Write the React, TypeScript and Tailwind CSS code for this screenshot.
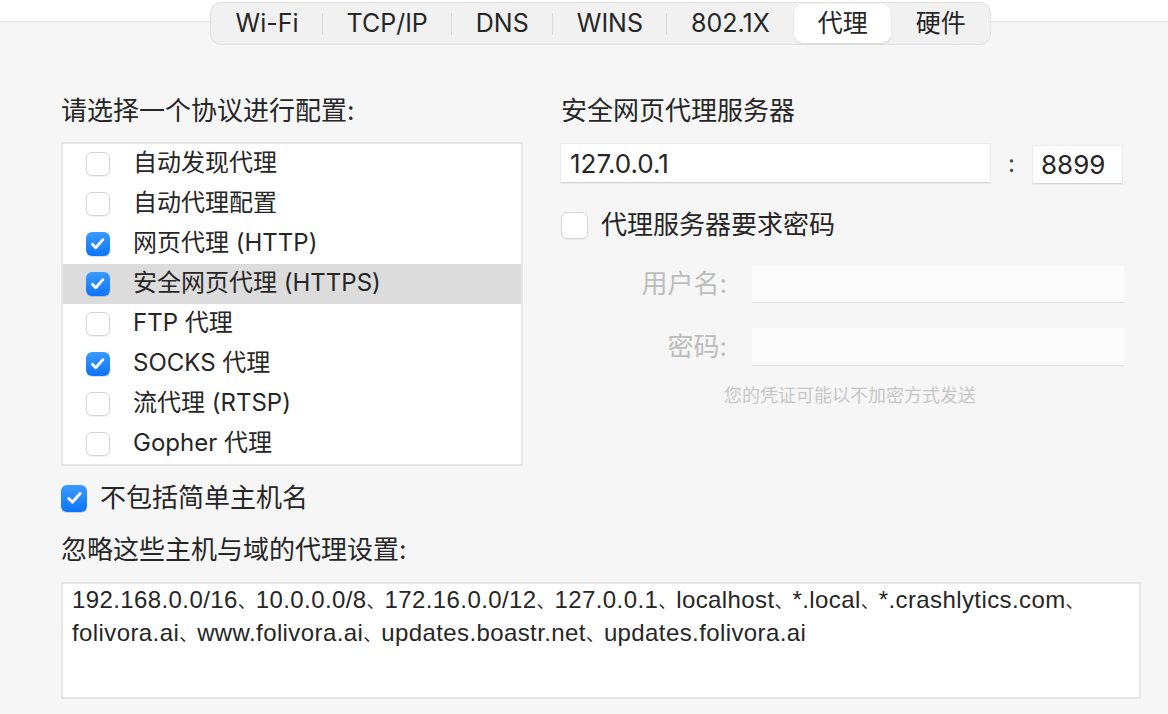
import React from 'react';

const ui = "font-['Inter','Noto_Sans_CJK_SC',sans-serif]";

const tabs = ['Wi-Fi', 'TCP/IP', 'DNS', 'WINS', '802.1X', '代理', '硬件'];
const activeTab = '代理';

const protocols = [
  { label: '自动发现代理', checked: false },
  { label: '自动代理配置', checked: false },
  { label: '网页代理 (HTTP)', checked: true },
  { label: '安全网页代理 (HTTPS)', checked: true, selected: true },
  { label: 'FTP 代理', checked: false },
  { label: 'SOCKS 代理', checked: true },
  { label: '流代理 (RTSP)', checked: false },
  { label: 'Gopher 代理', checked: false },
];

const bypassLines = [
  ['192.168.0.0/16', '10.0.0.0/8', '172.16.0.0/12', '127.0.0.1', 'localhost', '*.local', '*.crashlytics.com', ''],
  ['folivora.ai', 'www.folivora.ai', 'updates.boastr.net', 'updates.folivora.ai'],
];

const Check = ({ checked, size = 'w-6 h-6' }: { checked: boolean; size?: string }) =>
  checked ? (
    <span
      className={`${size} shrink-0 rounded-[6px] bg-gradient-to-b from-[#3a9bff] to-[#0a74fb] flex items-center justify-center shadow-[0_1px_1px_rgba(0,0,0,0.15)]`}
    >
      <svg viewBox="0 0 24 24" className="w-[80%] h-[80%]" fill="none">
        <path d="M5.5 12.8l4.2 4.4L18.6 7" stroke="white" strokeWidth="3.4" strokeLinecap="round" strokeLinejoin="round" />
      </svg>
    </span>
  ) : (
    <span
      className={`${size} shrink-0 rounded-[6px] bg-white border border-[#d6d6d6] shadow-[0_1px_1px_rgba(0,0,0,0.05)]`}
    />
  );

export default function App() {
  return (
    <div className={`w-[1168px] h-[714px] overflow-hidden bg-[#f6f6f6] text-[#262626] ${ui}`}>
      {/* header with segmented tabs */}
      <div className="relative h-[46px]">
        <div className="h-[22px] bg-white border-b border-[#e6e6e6]" />
        <div className="absolute left-[210px] top-[2px] h-[43px] flex items-center px-[1px] rounded-[11px] bg-[#f1f1f1] border border-[#e1e1e1]">
          {tabs.map((t, i) => {
            const active = t === activeTab;
            return (
              <React.Fragment key={t}>
                {i > 0 && (
                  <span className={`w-px h-[22px] ${i >= 5 ? 'bg-transparent' : 'bg-[#d9d9d9]'}`} />
                )}
                <span
                  className={`h-[39px] flex items-center px-[23.5px] text-[25px] leading-none ${
                    active ? 'bg-white rounded-[9px] shadow-[0_1px_2px_rgba(0,0,0,0.12)]' : ''
                  }`}
                >
                  {t}
                </span>
              </React.Fragment>
            );
          })}
        </div>
      </div>

      <div className="pl-[61px] pr-[27px]">
        <div className="flex">
          {/* left column */}
          <div className="w-[462px] pt-[47px]">
            <div className="text-[26px] leading-[36px]">请选择一个协议进行配置:</div>
            <div className="mt-[13px] bg-white border-2 border-[#e6e6e6]">
              {protocols.map((p) => (
                <div
                  key={p.label}
                  className={`h-10 flex items-center pl-[23px] gap-[23px] text-[24px] ${p.selected ? 'bg-[#dcdcdc]' : ''}`}
                >
                  <Check checked={p.checked} />
                  <span className="-mt-[2px]">{p.label}</span>
                </div>
              ))}
            </div>
          </div>

          {/* right column */}
          <div className="ml-[38px] flex-1 pt-[47px]">
            <div className="text-[26px] leading-[36px]">安全网页代理服务器</div>
            <div className="mt-[15px] flex items-start">
              <div className="w-[429px] h-[39px] bg-white border-b border-[#d6d6d6] shadow-[0_0_0_1px_#ececec] flex items-center pl-[9px] text-[26px]">
                127.0.0.1
              </div>
              <span className="w-[43px] h-[39px] flex items-center justify-center text-[24px] text-[#444]">:</span>
              <div className="mt-[2px] w-[89px] h-[38px] bg-white border-b border-[#d6d6d6] shadow-[0_0_0_1px_#ececec] flex items-center pl-[8px] text-[26px]">
                8899
              </div>
            </div>
            <div className="mt-[26px] flex items-center gap-[13px]">
              <Check checked={false} size="w-[27px] h-[27px]" />
              <span className="text-[26px] leading-[30px]">代理服务器要求密码</span>
            </div>
            <div className="mt-[24px] flex items-center">
              <span className="w-[166px] text-right text-[26px] text-[#bdbdbd]">用户名:</span>
              <div className="ml-[25px] w-[372px] h-[38px] bg-[#fbfbfb] border-b border-[#e2e2e2]" />
            </div>
            <div className="mt-[24px] flex items-center">
              <span className="w-[166px] text-right text-[26px] text-[#bdbdbd]">密码:</span>
              <div className="ml-[25px] w-[372px] h-[38px] bg-[#fbfbfb] border-b border-[#e2e2e2]" />
            </div>
            <div className="mt-[16px] pl-[163px] text-[18px] text-[#c6c6c6]">您的凭证可能以不加密方式发送</div>
          </div>
        </div>

        <div className="mt-[17px] flex items-center gap-[13px]">
          <Check checked size="w-[26px] h-[27px]" />
          <span className="text-[26px] leading-[30px]">不包括简单主机名</span>
        </div>
        <div className="mt-[19px] text-[26px] leading-[36px]">忽略这些主机与域的代理设置:</div>
        <div className="mt-[14px] h-[117px] bg-white border-2 border-[#e6e6e6] px-[9px] text-[24px] leading-[33px] tracking-[0.4px] font-['Liberation_Sans','Noto_Sans_CJK_SC',sans-serif]">
          <div className="-mt-[1px]">
            {bypassLines.map((line, li) => (
              <div key={li} className="h-[33px] whitespace-nowrap">
                {line.map((item, i) => (
                  <React.Fragment key={i}>
                    {i > 0 && (
                      <span className="inline-block w-[18px] font-['Noto_Sans_CJK_SC',sans-serif] text-[18px] leading-none">、</span>
                    )}
                    {item}
                  </React.Fragment>
                ))}
              </div>
            ))}
          </div>
        </div>
      </div>
    </div>
  );
}
